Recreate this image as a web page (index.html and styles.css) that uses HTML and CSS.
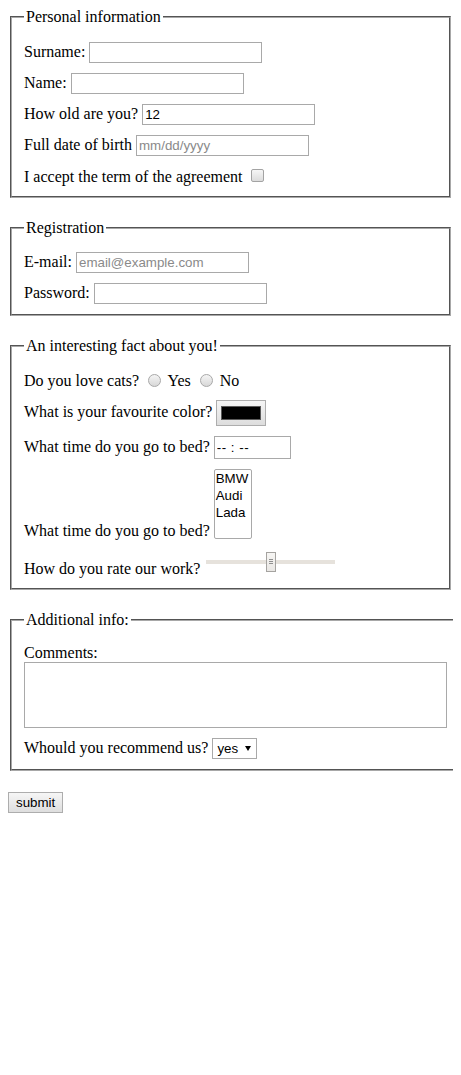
FILE: index.html
```html
<!DOCTYPE html>
<html lang="en">
<head>
<meta charset="utf-8">
<title>Form</title>
<link rel="stylesheet" href="styles.css">
</head>
<body>
<form class="form" action="#">
  <fieldset class="group">
    <legend class="legend">Personal information</legend>
    <div class="row"><label for="surname">Surname:</label> <input class="field" type="text" id="surname"></div>
    <div class="row"><label for="name">Name:</label> <input class="field" type="text" id="name"></div>
    <div class="row"><label for="age">How old are you?</label> <input class="field" type="number" id="age" value="12"></div>
    <div class="row"><label for="birth">Full date of birth</label> <input class="field" type="text" id="birth" placeholder="mm/dd/yyyy"></div>
    <div class="row"><label for="agree">I accept the term of the agreement</label> <input class="check" type="checkbox" id="agree"></div>
  </fieldset>

  <fieldset class="group">
    <legend class="legend">Registration</legend>
    <div class="row"><label for="email">E-mail:</label> <input class="field" type="email" id="email" placeholder="email@example.com"></div>
    <div class="row"><label for="pass">Password:</label> <input class="field" type="password" id="pass"></div>
  </fieldset>

  <fieldset class="group">
    <legend class="legend">An interesting fact about you!</legend>
    <div class="row">Do you love cats? <input class="radio" type="radio" name="cats" id="yes"> <label for="yes">Yes</label> <input class="radio" type="radio" name="cats" id="no"> <label for="no">No</label></div>
    <div class="row"><label for="color">What is your favourite color?</label> <input class="color" type="color" id="color" value="#000000"></div>
    <div class="row"><label for="bed">What time do you go to bed?</label> <input class="field time" type="text" id="bed" placeholder="-- : --"></div>
    <div class="row"><label for="cars">What time do you go to bed?</label> <select class="cars" id="cars" size="4" multiple>
        <option>BMW</option>
        <option>Audi</option>
        <option>Lada</option>
      </select></div>
    <div class="row"><label for="rate">How do you rate our work?</label> <input class="range" type="range" id="rate" min="0" max="100" value="50"></div>
  </fieldset>

  <fieldset class="group group-wide">
    <legend class="legend">Additional info:</legend>
    <div class="row"><label for="comments">Comments:</label>
      <textarea class="comments" id="comments"></textarea></div>
    <div class="row"><label for="rec">Whould you recommend us?</label> <span class="pick"><select class="yes" id="rec"><option>yes</option><option>no</option></select></span></div>
  </fieldset>

  <button class="submit" type="submit">submit</button>
</form>
</body>
</html>
```

FILE: styles.css
```css
html {
  background: #fff;
  overflow: hidden;
  scrollbar-width: none;
}

html::-webkit-scrollbar {
  display: none;
}

body {
  margin: 8px;
  font-family: "Liberation Serif", "Times New Roman", serif;
  font-size: 16px;
  color: #000;
}

.form {
  margin: 0;
}

.group {
  margin: 0 2px 21px;
  padding: 0.35em 0.75em 0.625em;
  border: 2px groove #a8a8a8;
  min-width: min-content;
}

.group-wide {
  width: 423px;
  margin-right: -8px;
}

.legend {
  padding: 0 2px;
}

.row {
  margin: 10px 0 0;
}

.field {
  font-family: "Liberation Sans", Arial, sans-serif;
  font-size: 13.333px;
  color: #000;
  width: 173px;
  height: 21px;
  box-sizing: border-box;
  border: 1px solid #a9a9a9;
  border-radius: 0;
  padding: 1px 2px;
  margin: 0;
  background: #fff;
  outline: none;
}

.field::placeholder {
  color: #8a8a8a;
  opacity: 1;
}

.field::-webkit-inner-spin-button,
.field::-webkit-outer-spin-button {
  -webkit-appearance: none;
  margin: 0;
}

.field[type="number"] {
  -moz-appearance: textfield;
  appearance: textfield;
}

.time {
  width: 77px;
  height: 23px;
}

.time::placeholder {
  color: #000;
  letter-spacing: 0.5px;
}

.check {
  -webkit-appearance: none;
  appearance: none;
  width: 13px;
  height: 13px;
  box-sizing: border-box;
  margin: 3px 3px 3px 4px;
  border: 1px solid #a3a3a3;
  border-radius: 2px;
  background: linear-gradient(#f6f6f6, #dcdcdc);
  vertical-align: -3px;
}

.radio {
  -webkit-appearance: none;
  appearance: none;
  width: 13px;
  height: 13px;
  box-sizing: border-box;
  margin: 3px 3px 0 5px;
  border: 1px solid #a8a8a8;
  border-radius: 50%;
  background: linear-gradient(#f4f4f4, #d8d8d8);
  vertical-align: -1px;
}

.color {
  -webkit-appearance: none;
  appearance: none;
  width: 50px;
  height: 26px;
  box-sizing: border-box;
  padding: 5px 4px;
  margin: 0;
  border: 1px solid #adadad;
  background: linear-gradient(#f5f5f5, #dddddd);
  vertical-align: middle;
}

.color::-webkit-color-swatch-wrapper {
  padding: 0;
}

.color::-webkit-color-swatch {
  border: 1px solid #5a5a5a;
  border-radius: 0;
}

.cars {
  font-family: "Liberation Sans", Arial, sans-serif;
  font-size: 13.333px;
  width: 38px;
  height: 70px;
  box-sizing: border-box;
  margin: 0;
  padding: 0;
  border: 1px solid #a9a9a9;
  overflow: hidden;
  vertical-align: -3px;
  background: #fff;
  outline: none;
}

.cars option {
  padding: 1px 1px 0;
  color: #000;
}

.range {
  -webkit-appearance: none;
  appearance: none;
  width: 129px;
  height: 24px;
  margin: 0 2px;
  padding: 0;
  background: transparent;
  vertical-align: 0;
}

.range::-webkit-slider-runnable-track {
  height: 4px;
  background: #e6e2dc;
  border: none;
}

.range::-webkit-slider-thumb {
  -webkit-appearance: none;
  width: 10px;
  height: 20px;
  margin-top: -8px;
  box-sizing: border-box;
  border: 1px solid #a5a3a0;
  background:
    repeating-linear-gradient(to bottom, #8f8f8f 0 1px, transparent 1px 2px) center / 4px 5px no-repeat,
    linear-gradient(#f7f6f4, #e9e7e4);
}

.comments {
  display: block;
  width: 423px;
  height: 66px;
  box-sizing: border-box;
  margin: 0 0 2px;
  padding: 2px;
  border: 1px solid #a9a9a9;
  font-family: "Liberation Sans", Arial, sans-serif;
  font-size: 13.333px;
  resize: none;
  outline: none;
}

.pick {
  position: relative;
  display: inline-block;
}

.pick::after {
  content: "";
  position: absolute;
  right: 6px;
  top: 8px;
  width: 0;
  height: 0;
  border-left: 3.5px solid transparent;
  border-right: 3.5px solid transparent;
  border-top: 5px solid #000;
  pointer-events: none;
}

.yes {
  -webkit-appearance: none;
  appearance: none;
  font-family: "Liberation Sans", Arial, sans-serif;
  font-size: 13.333px;
  color: #000;
  width: 45px;
  height: 21px;
  box-sizing: border-box;
  margin: 0;
  padding: 0 0 0 4px;
  border: 1px solid #a9a9a9;
  border-radius: 0;
  background: #fff;
  outline: none;
}

.submit {
  font-family: "Liberation Sans", Arial, sans-serif;
  font-size: 13.333px;
  color: #000;
  height: 21px;
  box-sizing: border-box;
  margin: 0;
  padding: 0 7px;
  border: 1px solid #adadad;
  border-radius: 0;
  background: linear-gradient(#f6f6f6, #dedede);
}
```
